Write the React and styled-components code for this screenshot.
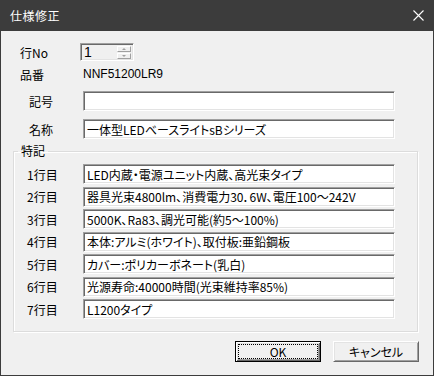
import styled, { createGlobalStyle } from 'styled-components'

const GlobalStyle = createGlobalStyle`
  html, body {
    margin: 0;
    padding: 0;
    background: #f0f0f0;
  }
  body {
    font-family: "Noto Sans CJK JP", "Liberation Sans", sans-serif;
    font-size: 12px;
    color: #000;
  }
`

const StyledWindow = styled.div`
  width: 434px;
  height: 376px;
  box-sizing: border-box;
  border: 1px solid #3c3c3c;
  border-top: none;
  background: #f0f0f0;
  display: flex;
  flex-direction: column;
`

const StyledTitleBar = styled.div`
  height: 31px;
  margin: 0 -1px;
  background: #3c3c3c;
  display: flex;
  align-items: center;
  justify-content: space-between;
  padding: 0 10px 0 10px;
  flex-shrink: 0;
`

const StyledTitle = styled.span`
  color: #fff;
  font-size: 12px;
  letter-spacing: 0.5px;
`

const StyledClose = styled.svg`
  width: 11px;
  height: 11px;
`

const StyledBody = styled.div`
  flex: 1;
  display: flex;
  flex-direction: column;
  padding: 0 13px 0 12px;
`

const StyledRow = styled.div`
  display: flex;
  align-items: center;
  height: ${(p) => p.$height || 20}px;
  margin-top: ${(p) => p.$top || 0}px;
`

const StyledLabel = styled.span`
  box-sizing: border-box;
  width: ${(p) => p.$width}px;
  padding-left: ${(p) => p.$indent || 0}px;
  flex-shrink: 0;
  font-feature-settings: "palt";
  white-space: nowrap;
`

const StyledValue = styled.span`
  padding-left: 3px;
  font-family: "Liberation Sans", "Noto Sans CJK JP", sans-serif;
  font-size: 12px;
`

const StyledInput = styled.div`
  width: 312px;
  height: 20px;
  box-sizing: border-box;
  background: #fff;
  border: 1px solid;
  border-color: #a0a0a0 #fff #fff #a0a0a0;
  box-shadow: inset 1px 1px #696969, inset -1px -1px #e3e3e3;
  padding: 0 3px;
  display: flex;
  align-items: center;
  white-space: nowrap;
  overflow: hidden;
  font-feature-settings: "palt";
`

const StyledSpin = styled(StyledInput)`
  width: 54px;
  height: 18px;
  background: #f0f0f0;
  padding: 1px 1px 1px 3px;
  justify-content: space-between;
  font-family: "Liberation Sans", sans-serif;
  font-size: 14px;
`

const StyledSpinButtons = styled.div`
  display: flex;
  flex-direction: column;
  gap: 1px;
  margin-right: 1px;
`

const StyledSpinButton = styled.div`
  width: 14px;
  height: 6px;
  box-sizing: border-box;
  border: 1px solid;
  border-color: #fff #a0a0a0 #a0a0a0 #fff;
  background: #f0f0f0;
  display: flex;
  align-items: center;
  justify-content: center;
`

const StyledArrow = styled.span`
  width: 0;
  height: 0;
  border-left: 2px solid transparent;
  border-right: 2px solid transparent;
  ${(p) => (p.$up ? 'border-bottom: 2px solid #a0a0a0;' : 'border-top: 2px solid #a0a0a0;')}
`

const StyledGroup = styled.fieldset`
  margin: 4px 2px 0 0;
  padding: 5px 0 12px 13px;
  border: 1px solid #dcdcdc;
  box-shadow: 1px 1px 0 #fff, inset 1px 1px 0 #fff;
  display: grid;
  grid-auto-rows: 20px;
  row-gap: 2.5px;
`

const StyledLegend = styled.legend`
  padding: 0 3px;
  margin-left: -9px;
  line-height: 16px;
`

const StyledFooter = styled.div`
  display: flex;
  justify-content: flex-end;
  gap: 12px;
  margin-top: 9px;
  padding-right: 1px;
`

const StyledButton = styled.div`
  width: 86px;
  height: 21px;
  box-sizing: border-box;
  background: #f0f0f0;
  border: 1px solid;
  border-color: ${(p) => (p.$default ? '#000' : '#fff #696969 #696969 #fff')};
  box-shadow: ${(p) =>
    p.$default
      ? 'inset 1px 1px #fff, inset -1px -1px #696969, inset 2px 2px #e3e3e3, inset -2px -2px #a0a0a0'
      : 'inset 1px 1px #e3e3e3, inset -1px -1px #a0a0a0'};
  display: flex;
  align-items: center;
  justify-content: center;
  padding: 3px;
`

const StyledFocus = styled.div`
  flex: 1;
  align-self: stretch;
  display: flex;
  align-items: center;
  justify-content: center;
  outline: ${(p) => (p.$focused ? '1px dotted #000' : 'none')};
  font-feature-settings: "palt";
`

const lines = [
  'LED内蔵・電源ユニット内蔵、高光束タイプ',
  '器具光束4800lm、消費電力30．6W、電圧100～242V',
  '5000K、Ra83、調光可能(約5～100%)',
  '本体:アルミ(ホワイト)、取付板:亜鉛鋼板',
  'カバー:ポリカーボネート(乳白)',
  '光源寿命:40000時間(光束維持率85%)',
  'L1200タイプ',
]

export default function App() {
  return (
    <>
      <GlobalStyle />
      <StyledWindow>
        <StyledTitleBar>
          <StyledTitle>仕様修正</StyledTitle>
          <StyledClose viewBox="0 0 11 11">
            <path d="M0.5 0.5L10.5 10.5M10.5 0.5L0.5 10.5" stroke="#fff" strokeWidth="1.1" fill="none" />
          </StyledClose>
        </StyledTitleBar>
        <StyledBody>
          <StyledRow $top={12} $height={18}>
            <StyledLabel $width={67} $indent={7}>行No</StyledLabel>
            <StyledSpin>
              1
              <StyledSpinButtons>
                <StyledSpinButton><StyledArrow $up /></StyledSpinButton>
                <StyledSpinButton><StyledArrow /></StyledSpinButton>
              </StyledSpinButtons>
            </StyledSpin>
          </StyledRow>
          <StyledRow $top={4} $height={18}>
            <StyledLabel $width={67} $indent={7}>品番</StyledLabel>
            <StyledValue>NNF51200LR9</StyledValue>
          </StyledRow>
          <StyledRow $top={8}>
            <StyledLabel $width={70} $indent={16}>記号</StyledLabel>
            <StyledInput />
          </StyledRow>
          <StyledRow $top={8}>
            <StyledLabel $width={70} $indent={16}>名称</StyledLabel>
            <StyledInput>一体型LEDベースライトsBシリーズ</StyledInput>
          </StyledRow>
          <StyledGroup>
            <StyledLegend>特記</StyledLegend>
            {lines.map((line, i) => (
              <StyledRow key={i}>
                <StyledLabel $width={56}>{i + 1}行目</StyledLabel>
                <StyledInput>{line}</StyledInput>
              </StyledRow>
            ))}
          </StyledGroup>
          <StyledFooter>
            <StyledButton $default>
              <StyledFocus $focused>OK</StyledFocus>
            </StyledButton>
            <StyledButton>
              <StyledFocus>キャンセル</StyledFocus>
            </StyledButton>
          </StyledFooter>
        </StyledBody>
      </StyledWindow>
    </>
  )
}
